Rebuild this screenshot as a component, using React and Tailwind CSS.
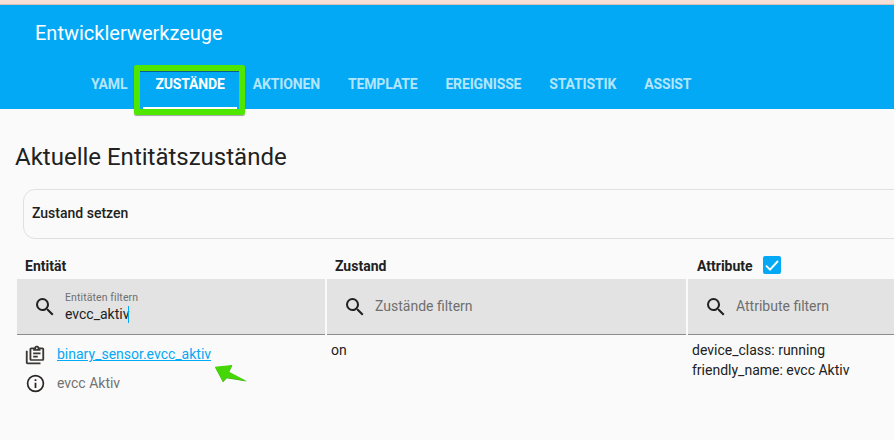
const font = { fontFamily: "Roboto, sans-serif" };

function SearchIcon() {
  return (
    <svg width="24" height="24" viewBox="0 0 24 24" className="shrink-0" fill="#212121">
      <path d="M9.5,3A6.5,6.5 0 0,1 16,9.5C16,11.11 15.41,12.59 14.44,13.73L14.71,14H15.5L20.5,19L19,20.5L14,15.5V14.71L13.73,14.44C12.59,15.41 11.11,16 9.5,16A6.5,6.5 0 0,1 3,9.5A6.5,6.5 0 0,1 9.5,3M9.5,5C7,5 5,7 5,9.5C5,12 7,14 9.5,14C12,14 14,12 14,9.5C14,7 12,5 9.5,5Z" />
    </svg>
  );
}

function ClipboardIcon() {
  return (
    <svg width="22" height="20" viewBox="0 0 24 24" preserveAspectRatio="none" fill="#3a3633">
      <path d="M4 7V21H18V23H4C2.9 23 2 22.1 2 21V7H4M20 3C21.1 3 22 3.9 22 5V17C22 18.1 21.1 19 20 19H8C6.9 19 6 18.1 6 17V5C6 3.9 6.9 3 8 3H11.18C11.6 1.84 12.7 1 14 1C15.3 1 16.4 1.84 16.82 3H20M14 3C13.45 3 13 3.45 13 4C13 4.55 13.45 5 14 5C14.55 5 15 4.55 15 4C15 3.45 14.55 3 14 3M10 7V5H8V17H20V5H18V7H10M15 15H10V13H15V15M18 11H10V9H18V11Z" />
    </svg>
  );
}

function InfoIcon() {
  return (
    <svg width="21" height="21" viewBox="0 0 24 24" fill="#292524">
      <path d="M11,9H13V7H11M12,20C7.59,20 4,16.41 4,12C4,7.59 7.59,4 12,4C16.41,4 20,7.59 20,12C20,16.41 16.41,20 12,20M12,2A10,10 0 0,0 2,12A10,10 0 0,0 12,22A10,10 0 0,0 22,12A10,10 0 0,0 12,2M11,17H13V11H11V17Z" />
    </svg>
  );
}

function Tab({ children, active }) {
  return (
    <div className={"h-[56px] px-[14px] flex items-center justify-center text-sm font-bold tracking-[-0.15px] " + (active ? "text-white relative" : "text-[#b3e5fc]")}>
      <span className="mt-[6px]">{children}</span>
      {active ? <div className="absolute left-[2px] right-[2px] bottom-0 h-[2px] bg-white" /> : null}
    </div>
  );
}

function Filter({ placeholder }) {
  return (
    <div className="h-[56px] bg-[#e3e3e3] border-b border-[#8c8c8c] flex items-center pl-[16px]">
      <SearchIcon />
      <span className="ml-[8px] -mt-px text-sm text-[#6f6f6f]">{placeholder}</span>
    </div>
  );
}

export default function App() {
  return (
    <div className="w-[894px] h-[440px] overflow-hidden bg-[#fafafa] relative text-[#212121]" style={font}>
      <div className="h-[4px] bg-[#f5dfd6]" />
      <div className="h-px bg-[#d9bfb5]" />
      <header className="h-[104px] bg-[#03a9f4] flex flex-col">
        <div className="h-[56px] pl-[35px] pt-[14px] text-xl leading-[28px] text-white">Entwicklerwerkzeuge</div>
        <nav className="flex pl-[77px] mt-[-8px]">
          <Tab>YAML</Tab>
          <Tab active>ZUSTÄNDE</Tab>
          <Tab>AKTIONEN</Tab>
          <Tab>TEMPLATE</Tab>
          <Tab>EREIGNISSE</Tab>
          <Tab>STATISTIK</Tab>
          <Tab>ASSIST</Tab>
        </nav>
      </header>

      <main className="pl-[15px]">
        <h1 className="text-2xl leading-[32px] mt-[32px] text-[#212121]">Aktuelle Entitätszustände</h1>
        <div className="ml-[8px] mt-[16px] w-[900px] h-[50px] border border-[#e0e0e0] rounded-[12px] flex items-center pl-[8px] pb-[2px] text-sm font-medium">
          Zustand setzen
        </div>

        <div className="flex gap-[2px] mt-[15px] ml-[2px]">
          <div className="w-[308px]">
            <div className="h-[25px] pl-[8px] text-sm font-bold leading-[25px]">Entität</div>
            <div className="h-[56px] bg-[#e3e3e3] border-b border-[#8c8c8c] flex items-center pl-[16px]">
              <SearchIcon />
              <div className="ml-[8px] mt-[3px]">
                <div className="text-[10.5px] leading-[12px] tracking-[0.1px] text-[#6f6f6f]">Entitäten filtern</div>
                <div className="text-sm leading-[20px] flex items-center text-[#212121]">
                  evcc_aktiv<span className="w-px h-[17px] bg-[#03a9f4] -ml-px" />
                </div>
              </div>
            </div>
            <div className="pl-[7px] pt-[8px]">
              <div className="flex items-center h-[24px]">
                <span className="w-[22px] flex justify-center"><ClipboardIcon /></span>
                <a className="ml-[11px] -mt-[2px] text-sm text-[#03a9f4] underline">binary_sensor.evcc_aktiv</a>
              </div>
              <div className="flex items-center h-[24px] mt-[4px]">
                <span className="w-[22px] flex justify-center"><InfoIcon /></span>
                <span className="ml-[11px] -mt-px text-sm text-[#727272]">evcc Aktiv</span>
              </div>
            </div>
          </div>

          <div className="w-[359px]">
            <div className="h-[25px] pl-[8px] text-sm font-bold leading-[25px]">Zustand</div>
            <Filter placeholder="Zustände filtern" />
            <div className="pl-[4px] pt-[5px] text-sm leading-[20px]">on</div>
          </div>

          <div className="w-[206px] shrink-0">
            <div className="h-[25px] pl-[9px] flex items-center gap-[10px] text-sm font-bold -mt-[2px] mb-[2px]">
              <span className="mt-[3px]">Attribute</span>
              <span className="w-[18px] h-[18px] rounded-[2px] bg-[#03a9f4] flex items-center justify-center">
                <svg width="16" height="16" viewBox="0 0 24 24" fill="none" stroke="#fff" strokeWidth="2.8">
                  <path d="M3 13l6 6L21 6" />
                </svg>
              </span>
            </div>
            <Filter placeholder="Attribute filtern" />
            <div className="pl-[4px] pt-[5px] text-sm leading-[20px] whitespace-nowrap">
              <div>device_class: running</div>
              <div>friendly_name: evcc Aktiv</div>
            </div>
          </div>
        </div>
      </main>

      <div className="absolute left-[134px] top-[65px] w-[111px] h-[50px] border-[6px] border-[#4fe600] rounded-[2px] shadow-[0_1px_1px_rgba(0,0,0,0.35)]">
        <div className="h-px bg-[#0b5f8f]" />
      </div>
      <svg className="absolute left-[214px] top-[362px]" width="36" height="22" viewBox="0 0 36 22">
        <path d="M1 4.7L18.3 3L15 9.7L32.7 19L12.7 15.7L9 19.7Z" fill="#3a9e0a" transform="translate(0 0.6)" />
        <path d="M1 4.7L18.3 3L15 9.7L32.7 19L12.7 15.7L9 19.7Z" fill="#45d606" />
      </svg>
    </div>
  );
}
